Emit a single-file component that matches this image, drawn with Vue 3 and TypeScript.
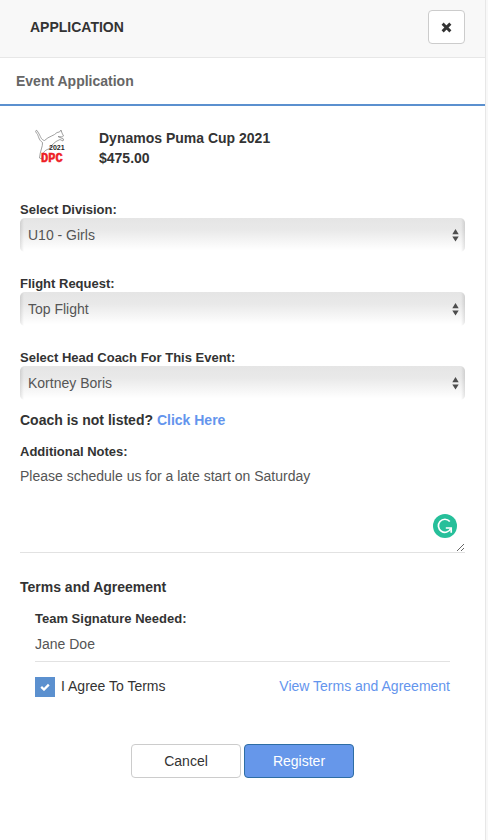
<script setup lang="ts">
import { ref } from 'vue'

interface SelectField {
  id: string
  label: string
  value: string
  options: string[]
}

const fields = ref<SelectField[]>([
  { id: 'division', label: 'Select Division:', value: 'U10 - Girls', options: ['U10 - Girls'] },
  { id: 'flight', label: 'Flight Request:', value: 'Top Flight', options: ['Top Flight'] },
  { id: 'coach', label: 'Select Head Coach For This Event:', value: 'Kortney Boris', options: ['Kortney Boris'] },
])
const notes = ref('Please schedule us for a late start on Saturday')
const signature = ref('Jane Doe')
const agreed = ref(true)
</script>

<template>
  <main class="panel">
    <header class="header">
      <h1 class="title">APPLICATION</h1>
      <button class="btn close" type="button" aria-label="Close">
        <svg width="11" height="11" viewBox="0 0 11 11" aria-hidden="true">
          <path d="M2.700 2.700L8.300 8.300M8.300 2.700L2.700 8.300" stroke="#333" stroke-width="3" stroke-linecap="square" />
        </svg>
      </button>
    </header>
    <h2 class="tab">Event Application</h2>

    <form class="body" @submit.prevent>
      <section class="event">
        <svg class="logo" width="34" height="40" viewBox="0 0 34 40" aria-hidden="true">
          <path
            d="M2 2.500C0 2 .5 4.500 2 5.500C3.500 7.500 3.500 12 7.500 14.500C8 18 5 23 4.500 30L7 31C7 26 9 22 14 21L17 17L21 13.500L25 11.500L28 13L28.500 11L25 9.500L23 8.500C26 9 28 9 28.500 8L27 5L26 2L24.500 4L22 4.500C19 8 14 8 9.500 12.500C6 12 5.500 8 3.500 5Z"
            fill="#fff"
            stroke="#888"
            stroke-width="0.8"
            stroke-linejoin="round"
          />
          <text class="logo-year" x="14" y="22">2021</text>
          <text class="logo-name" x="6" y="34">DPC</text>
        </svg>
        <div class="event-text">
          <div>Dynamos Puma Cup 2021</div>
          <div>$475.00</div>
        </div>
      </section>

      <div class="selects">
        <div v-for="field in fields" :key="field.id" class="field">
          <label :for="field.id">{{ field.label }}</label>
          <div class="select-wrap">
            <select :id="field.id" v-model="field.value">
              <option v-for="option in field.options" :key="option">{{ option }}</option>
            </select>
            <svg class="arrows" width="7" height="13" viewBox="0 0 7 13" aria-hidden="true">
              <path d="M3.500 0L6.700 5.200H.3ZM.3 7.500H6.700L3.500 12.500Z" fill="#4d4d4d" />
            </svg>
          </div>
        </div>
      </div>

      <p class="strong">Coach is not listed? <a href="#">Click Here</a></p>

      <div class="field notes">
        <label for="notes">Additional Notes:</label>
        <textarea id="notes" v-model="notes" spellcheck="false"></textarea>
        <svg class="assistant" width="24" height="24" viewBox="0 0 24 24" aria-hidden="true">
          <circle cx="12" cy="12" r="12" fill="#26bf9a" />
          <path d="M16.800 7.500A6.500 6.500 0 1 0 17.800 14.500" fill="none" stroke="#fff" stroke-width="1.7" />
          <path d="M12.800 14H18.200V18.800" fill="none" stroke="#fff" stroke-width="1.700" />
        </svg>
      </div>

      <h3 class="strong terms-title">Terms and Agreement</h3>
      <section class="terms">
        <div class="field">
          <label for="signature">Team Signature Needed:</label>
          <input id="signature" v-model="signature" class="signature" type="text" />
        </div>
        <div class="agree-row">
          <label class="agree">
            <span class="check">
              <input v-model="agreed" type="checkbox" />
              <svg v-if="agreed" width="10" height="8" viewBox="0 0 10 8" aria-hidden="true">
                <path d="M1.200 3.800L4 6.500L8.800 1.600" fill="none" stroke="#fff" stroke-width="2.300" />
              </svg>
            </span>
            I Agree To Terms
          </label>
          <a href="#">View Terms and Agreement</a>
        </div>
      </section>

      <div class="actions">
        <button class="btn action" type="button">Cancel</button>
        <button class="btn action primary" type="submit">Register</button>
      </div>
    </form>
  </main>
</template>

<style>
body {
  margin: 0;
  background: #f8f8f8;
}
</style>

<style scoped>
.panel {
  box-sizing: border-box;
  min-height: 100vh;
  margin-right: 2px;
  border-right: 1px solid #e7e7e7;
  background: #fff;
  color: #333;
  font: 14px/20px "Liberation Sans", Arial, sans-serif;
}
.header {
  display: flex;
  align-items: center;
  justify-content: space-between;
  padding: 10px 20px 13px 30px;
  border-bottom: 1px solid #e7e7e7;
  background: #f8f8f8;
}
.title,
.tab {
  margin: 0;
  font-size: 14px;
  font-weight: bold;
}
.tab {
  padding: 13px 16px;
  border-bottom: 2px solid #5b90cf;
  color: #666;
}
.btn {
  box-sizing: border-box;
  height: 34px;
  padding: 0;
  border: 1px solid #ccc;
  border-radius: 4px;
  background: #fff;
  color: #333;
  font: inherit;
}
.close {
  display: flex;
  align-items: center;
  justify-content: center;
  width: 37px;
}
.body {
  padding: 22px 20px;
}
.event {
  display: flex;
  gap: 30px;
  padding-left: 15px;
  font-weight: bold;
}
.logo {
  display: block;
}
.logo-year {
  font: bold 7px "Liberation Sans", sans-serif;
  fill: #222;
}
.logo-name {
  font: bold 12px "Liberation Sans Narrow", "Liberation Mono", monospace;
  fill: #ee1c25;
  stroke: #ee1c25;
  stroke-width: 0.5px;
}
.selects {
  display: grid;
  gap: 22px;
  margin-top: 32px;
}
.field label {
  display: block;
  padding-top: 2px;
  font-size: 13px;
  font-weight: bold;
  line-height: 16px;
}
.select-wrap {
  position: relative;
}
select {
  display: block;
  box-sizing: border-box;
  width: 100%;
  height: 34px;
  padding: 0 24px 0 8px;
  border: 0;
  border-radius: 5px;
  appearance: none;
  background:
    linear-gradient(to right, rgba(0, 0, 0, 0.1), transparent 4px, transparent calc(100% - 4px), rgba(0, 0, 0, 0.1)),
    linear-gradient(#e5e5e5, #e9e9e9 35%, #fff 95%);
  color: #555;
  font: inherit;
}
.arrows {
  position: absolute;
  top: 11px;
  right: 6px;
  pointer-events: none;
}
.strong {
  margin: 10px 0 12px;
  font-size: 14px;
  font-weight: bold;
}
a {
  color: #6495ed;
  text-decoration: none;
}
.notes {
  position: relative;
}
textarea,
.signature {
  display: block;
  box-sizing: border-box;
  width: 100%;
  border: 0;
  border-bottom: 1px solid #e2e2e2;
  outline: 0;
  background: transparent;
  color: #555;
  font: inherit;
}
textarea {
  height: 93px;
  padding: 6px 0;
  resize: vertical;
}
.assistant {
  position: absolute;
  right: 8px;
  bottom: 15px;
}
.terms-title {
  margin-top: 24px;
}
.terms {
  padding: 0 15px;
}
.signature {
  height: 35px;
  padding: 0;
}
.agree-row {
  display: flex;
  align-items: flex-start;
  justify-content: space-between;
  margin-top: 15px;
  line-height: 18px;
}
.agree {
  display: flex;
  gap: 6px;
}
.check {
  display: grid;
  place-items: center;
  width: 20px;
  height: 20px;
}
.check > * {
  grid-area: 1 / 1;
}
.check svg {
  z-index: 1;
  pointer-events: none;
}
.check input {
  width: 20px;
  height: 20px;
  margin: 0;
  border: 1px solid #5b90cf;
  appearance: none;
}
.check input:checked {
  background: #5b90cf;
}
.actions {
  display: flex;
  justify-content: center;
  gap: 3px;
  margin-top: 47px;
}
.action {
  width: 110px;
}
.primary {
  border-color: #2e6da4;
  background: #6697ea;
  color: #fff;
}
</style>
